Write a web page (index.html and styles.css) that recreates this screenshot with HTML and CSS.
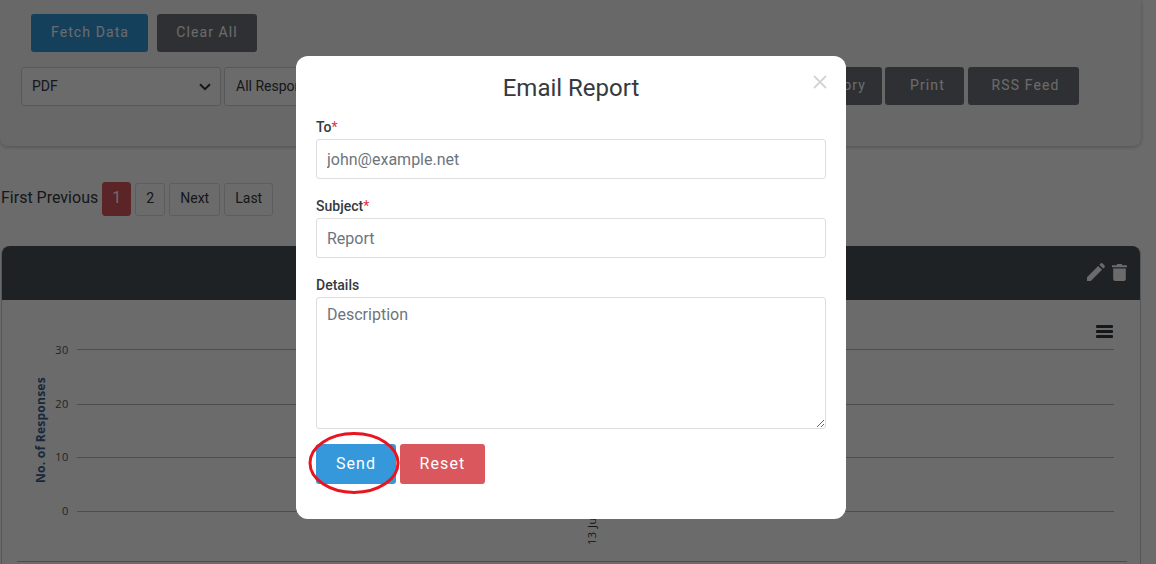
FILE: index.html
```html
<!DOCTYPE html>
<html lang="en">
<head>
<meta charset="utf-8">
<title>Email Report</title>
<link rel="stylesheet" href="styles.css">
</head>
<body>
<main class="page">
  <section class="filters">
    <div class="row-actions">
      <button class="btn btn-blue btn-fetch">Fetch Data</button>
      <button class="btn btn-dark btn-clear">Clear All</button>
    </div>
    <div class="row-tools">
      <div class="select select-a">PDF
        <svg class="chev" width="12" height="8" viewBox="0 0 12 8"><path d="M1 1.2 6 6.2 11 1.2" fill="none" stroke="#343a40" stroke-width="2"/></svg>
      </div>
      <div class="select select-b">All Responses</div>
      <div class="spacer"></div>
      <button class="btn btn-dark btn-history">Download History</button>
      <button class="btn btn-dark btn-print">Print</button>
      <button class="btn btn-dark btn-rss">RSS Feed</button>
    </div>
  </section>

  <nav class="pager">
    <span class="pager-text">First Previous</span>
    <a class="pg pg-on">1</a>
    <a class="pg pg-2">2</a>
    <a class="pg pg-next">Next</a>
    <a class="pg pg-last">Last</a>
  </nav>

  <section class="panel">
    <header class="panel-head">
      <svg width="18" height="18" viewBox="0 0 18 18"><path d="M0 18V14.2L11.2 3l3.8 3.8L3.8 18ZM12.4 1.8 13.6.6a1.4 1.4 0 0 1 2 0l1.8 1.8a1.4 1.4 0 0 1 0 2L16.2 5.6Z" fill="#fff"/></svg>
      <svg width="15" height="17" viewBox="0 0 15 17"><path d="M0 1.200h4.600L5.400 0h4.200l.8 1.200H15v2H0ZM1.200 4.400h12.600V15a2 2 0 0 1-2 2H3.200a2 2 0 0 1-2-2Z" fill="#fff"/></svg>
    </header>
    <svg class="chart" width="1138" height="264" viewBox="0 0 1138 264">
      <g class="menu">
        <rect x="1094" y="25" width="17" height="3" rx="1"/>
        <rect x="1094" y="30" width="17" height="3" rx="1"/>
        <rect x="1094" y="35" width="17" height="3" rx="1"/>
      </g>
      <g class="grid">
        <line x1="75" y1="49.500" x2="1112" y2="49.500"/>
        <line x1="75" y1="104.500" x2="1112" y2="104.500"/>
        <line x1="75" y1="157.500" x2="1112" y2="157.500"/>
        <line x1="75" y1="211.500" x2="1112" y2="211.500"/>
        <line x1="15" y1="261.500" x2="1125" y2="261.500"/>
      </g>
      <g class="ticks">
        <text x="67" y="54">30</text>
        <text x="67" y="108">20</text>
        <text x="67" y="161">10</text>
        <text x="67" y="215">0</text>
      </g>
      <text class="ytitle" transform="translate(43 130) rotate(-90)">No. of Responses</text>
      <text class="xtick" transform="translate(594 245) rotate(-90)">13 Jul</text>
    </svg>
  </section>
</main>

<div class="overlay"></div>

<div class="modal">
  <svg class="close" width="14" height="14" viewBox="0 0 14 14"><path d="M1 1 13 13M13 1 1 13" fill="none" stroke="#d4d4d4" stroke-width="1.800"/></svg>
  <h2 class="modal-title">Email Report</h2>
  <form class="modal-form">
    <label class="lbl">To<span class="req">*</span></label>
    <input class="field" type="text" placeholder="john@example.net">
    <label class="lbl lbl-next">Subject<span class="req">*</span></label>
    <input class="field" type="text" placeholder="Report">
    <label class="lbl lbl-next">Details</label>
    <textarea class="field area" placeholder="Description"></textarea>
    <div class="modal-actions">
      <button type="button" class="mbtn mbtn-send">Send</button>
      <button type="button" class="mbtn mbtn-reset">Reset</button>
    </div>
  </form>
  <svg class="ring" width="94" height="64" viewBox="0 0 94 64"><ellipse cx="46" cy="31" rx="44" ry="29.500" fill="none" stroke="#e8141f" stroke-width="3"/></svg>
</div>
</body>
</html>
```
FILE: styles.css
```css
* { box-sizing: border-box; }
html, body { height: 100%; }
body {
  margin: 0;
  background: #fff;
  font-family: Roboto, "Liberation Sans", sans-serif;
  color: #343a40;
  overflow: hidden;
}
.page { width: 1141px; }

.filters {
  height: 146px;
  background: #f8f8f8;
  border-radius: 0 0 8px 8px;
  box-shadow: 0 1px 4px rgba(0, 0, 0, .25);
  padding: 14px 0 0 21px;
}
.row-actions { display: flex; gap: 9px; padding-left: 10px; }
.btn {
  height: 38px;
  border: 0;
  border-radius: 3px;
  color: #fff;
  font: 400 14px Roboto, sans-serif;
  letter-spacing: 1.100px;
  padding: 0 0 2px;
}
.btn-blue { background: #3498db; }
.btn-dark { background: #70747c; }
.btn-fetch { width: 117px; padding-left: 1px; }
.btn-clear { width: 100px; }
.row-tools { display: flex; align-items: flex-start; margin-top: 15px; padding-right: 62px; }
.select {
  position: relative;
  height: 39px;
  width: 200px;
  background: #fff;
  border: 1px solid #ced4da;
  border-radius: 3px;
  font-size: 14px;
  line-height: 37px;
  padding-left: 10px;
}
.select-b { margin-left: 3px; padding-left: 11px; }
.chev { position: absolute; right: 9px; top: 15px; }
.spacer { flex: 1; }
.btn-history { width: 160px; }
.btn-print { width: 79px; margin-left: 3px; padding-left: 6px; }
.btn-rss { width: 111px; margin-left: 4px; padding-left: 4px; }

.pager { display: flex; align-items: center; gap: 4px; margin-top: 35px; padding-left: 1px; height: 35px; }
.pager-text { font-size: 16px; padding-bottom: 2px; }
.pg {
  height: 33px;
  border: 1px solid #ddd;
  border-radius: 3px;
  font-size: 14px;
  line-height: 29px;
  text-align: center;
  margin-top: 1px;
}
.pg-on { width: 29px; height: 34px; margin-top: 0; background: #d9575d; border-color: #d9575d; color: #fff; font-size: 16px; line-height: 30px; }
.pg-2 { width: 30px; }
.pg-next { width: 51px; }
.pg-last { width: 49px; }

.panel {
  margin: 30px 0 0 1px;
  height: 330px;
  border: 1px solid #ccc;
  border-bottom: 0;
  border-radius: 8px 8px 0 0;
}
.panel-head {
  height: 54px;
  margin-top: -1px;
  background: #4b5259;
  border-radius: 8px 8px 0 0;
  display: flex;
  justify-content: flex-end;
  align-items: center;
  gap: 7px;
  padding: 0 13px 2px 0;
}
.chart { display: block; }
.menu rect { fill: #343a40; }
.grid line { stroke: #b8b8b8; stroke-width: 1; }
.ticks text { font: 11px "Open Sans", sans-serif; letter-spacing: .6px; fill: #555; text-anchor: end; }
.ytitle { font: bold 12px "Open Sans", sans-serif; letter-spacing: .25px; fill: #3a5f90; text-anchor: middle; }
.xtick { font: 11px "Open Sans", sans-serif; letter-spacing: .5px; fill: #333; }

.overlay {
  position: fixed;
  inset: 0;
  background: rgba(0, 0, 0, .58);
}
.modal {
  position: fixed;
  left: 296px;
  top: 56px;
  width: 550px;
  height: 463px;
  background: #fff;
  border-radius: 12px;
  padding: 14px 20px 0;
}
.close { position: absolute; left: 517px; top: 19px; }
.modal-title {
  margin: 0;
  height: 48px;
  font-size: 24px;
  font-weight: 400;
  line-height: 36px;
  text-align: center;
  color: #343a40;
}
.modal-form { display: flex; flex-direction: column; }
.lbl { font-size: 14px; font-weight: 500; line-height: 19px; padding-bottom: 2px; color: #343a40; }
.lbl-next { margin-top: 18px; }
.req { color: #dc3545; font-weight: 400; }
.field {
  display: block;
  width: 100%;
  height: 40px;
  border: 1px solid #ddd;
  border-radius: 3px;
  padding: 0 10px;
  font: 16px Roboto, sans-serif;
  color: #495057;
  outline: none;
}
.field::placeholder { color: #6c757d; opacity: 1; }
.area { height: 132px; padding-top: 5px; line-height: 24px; resize: vertical; }
.modal-actions { display: flex; gap: 4px; margin-top: 15px; }
.mbtn {
  height: 40px;
  border: 0;
  border-radius: 3px;
  color: #fff;
  font: 400 16px Roboto, sans-serif;
  letter-spacing: 1.100px;
  padding: 0 0 2px;
}
.mbtn-send { width: 80px; background: #3498db; }
.mbtn-reset { width: 85px; background: #d9575d; }
.ring { position: absolute; left: 12px; top: 376px; pointer-events: none; }
```
